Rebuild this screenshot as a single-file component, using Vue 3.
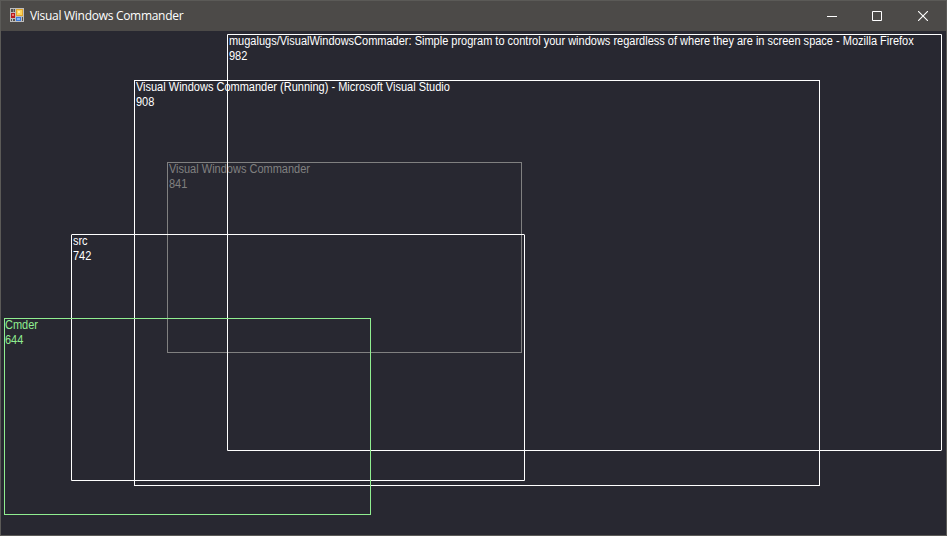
<script setup>
const windows = [
  { title: 'Visual Windows Commander', id: 841, x: 167, y: 162, w: 355, h: 191, tone: 'muted' },
  { title: 'Visual Windows Commander (Running) - Microsoft Visual Studio', id: 908, x: 134, y: 80, w: 686, h: 406, tone: 'plain' },
  { title: 'src', id: 742, x: 71, y: 234, w: 454, h: 247, tone: 'plain soft-top' },
  { title: 'mugalugs/VisualWindowsCommader: Simple program to control your windows regardless of where they are in screen space - Mozilla Firefox', id: 982, x: 227, y: 34, w: 715, h: 417, tone: 'plain soft-end' },
  { title: 'Cmder', id: 644, x: 4, y: 318, w: 367, h: 197, tone: 'active' },
]
</script>

<template>
  <div class="frame">
    <header class="titlebar">
      <svg class="app-icon" width="14" height="14" viewBox="0 0 14 14" shape-rendering="crispEdges">
        <rect width="14" height="14" fill="#bdbdbd" />
        <path d="M1 1h4v3H1zM1 11h1v2H1zM3 11h2v2H3zM12 9h1v4h-1z" fill="#55534f" />
        <path d="M3 1h1v3H3z" fill="#8c8b89" />
        <rect x="1" y="5" width="4" height="5" fill="#b71c20" />
        <rect x="2" y="6" width="2" height="2" fill="#ef7770" />
        <rect x="6" y="1" width="7" height="7" fill="#e0a52a" />
        <rect x="7" y="2" width="5" height="5" fill="#fcd45c" />
        <rect x="8" y="3" width="2" height="2" fill="#ffeda6" />
        <rect x="6" y="9" width="5" height="4" fill="#3b78d8" />
        <rect x="7" y="10" width="3" height="2" fill="#83b4f7" />
      </svg>
      <h1 class="caption">Visual Windows Commander</h1>
      <div class="controls">
        <button aria-label="Minimize">
          <svg width="10" height="10" viewBox="0 0 10 10"><path d="M0 5.5h10" stroke="#fff" /></svg>
        </button>
        <button aria-label="Maximize">
          <svg width="10" height="10" viewBox="0 0 10 10"><path d="M.5.5h9v9h-9z" fill="none" stroke="#fff" /></svg>
        </button>
        <button aria-label="Close">
          <svg width="10" height="10" viewBox="0 0 10 10"><path d="M0 0l10 10M10 0L0 10" stroke="#fff" stroke-width="1.1" /></svg>
        </button>
      </div>
    </header>
    <main class="desktop">
      <section
        v-for="win in windows"
        :key="win.id"
        class="window"
        :class="win.tone"
        :style="{ left: win.x + 'px', top: win.y + 'px', width: win.w + 'px', height: win.h + 'px' }"
      >
        <div class="label">{{ win.title }}<br />{{ win.id }}</div>
      </section>
    </main>
  </div>
</template>

<style>
body {
  margin: 0;
  background: #282831;
}
</style>

<style scoped>
.frame {
  position: relative;
  box-sizing: border-box;
  width: 947px;
  height: 536px;
  border: 1px solid #5b5a57;
  background: #282831;
  display: flex;
  flex-direction: column;
  overflow: hidden;
}
.titlebar {
  height: 30px;
  flex: none;
  display: flex;
  align-items: center;
  padding-left: 9px;
  background: #4c4a48;
}
.app-icon {
  flex: none;
  margin-bottom: 2px;
}
.caption {
  margin: 0 0 0 6px;
  font: 400 12px/16px "Open Sans", "Noto Sans", sans-serif;
  letter-spacing: -0.29px;
  color: #fff;
  white-space: nowrap;
}
.controls {
  display: flex;
  align-self: stretch;
  margin-left: auto;
}
.controls button {
  width: 46px;
  padding: 0;
  border: 0;
  background: none;
  display: flex;
  align-items: center;
  justify-content: center;
}
.controls button:first-child {
  width: 44px;
}
.desktop {
  flex: 1;
}
.window {
  position: absolute;
  box-sizing: border-box;
  margin: -1px 0 0 -1px;
  border: 1px solid currentColor;
}
.plain {
  color: #fff;
}
.muted {
  color: #808080;
}
.active {
  color: #90ee90;
}
.soft-top {
  border-radius: 1px 1px 0 0;
}
.soft-end {
  border-radius: 0 0 1px 0;
}
.label {
  width: max-content;
  margin-top: -1px;
  padding-left: 1px;
  font: 12px/15px "Liberation Sans", Arial, sans-serif;
  white-space: nowrap;
  transform: scaleX(0.917);
  transform-origin: 0 0;
}
.active .label {
  padding-left: 0;
}
</style>
